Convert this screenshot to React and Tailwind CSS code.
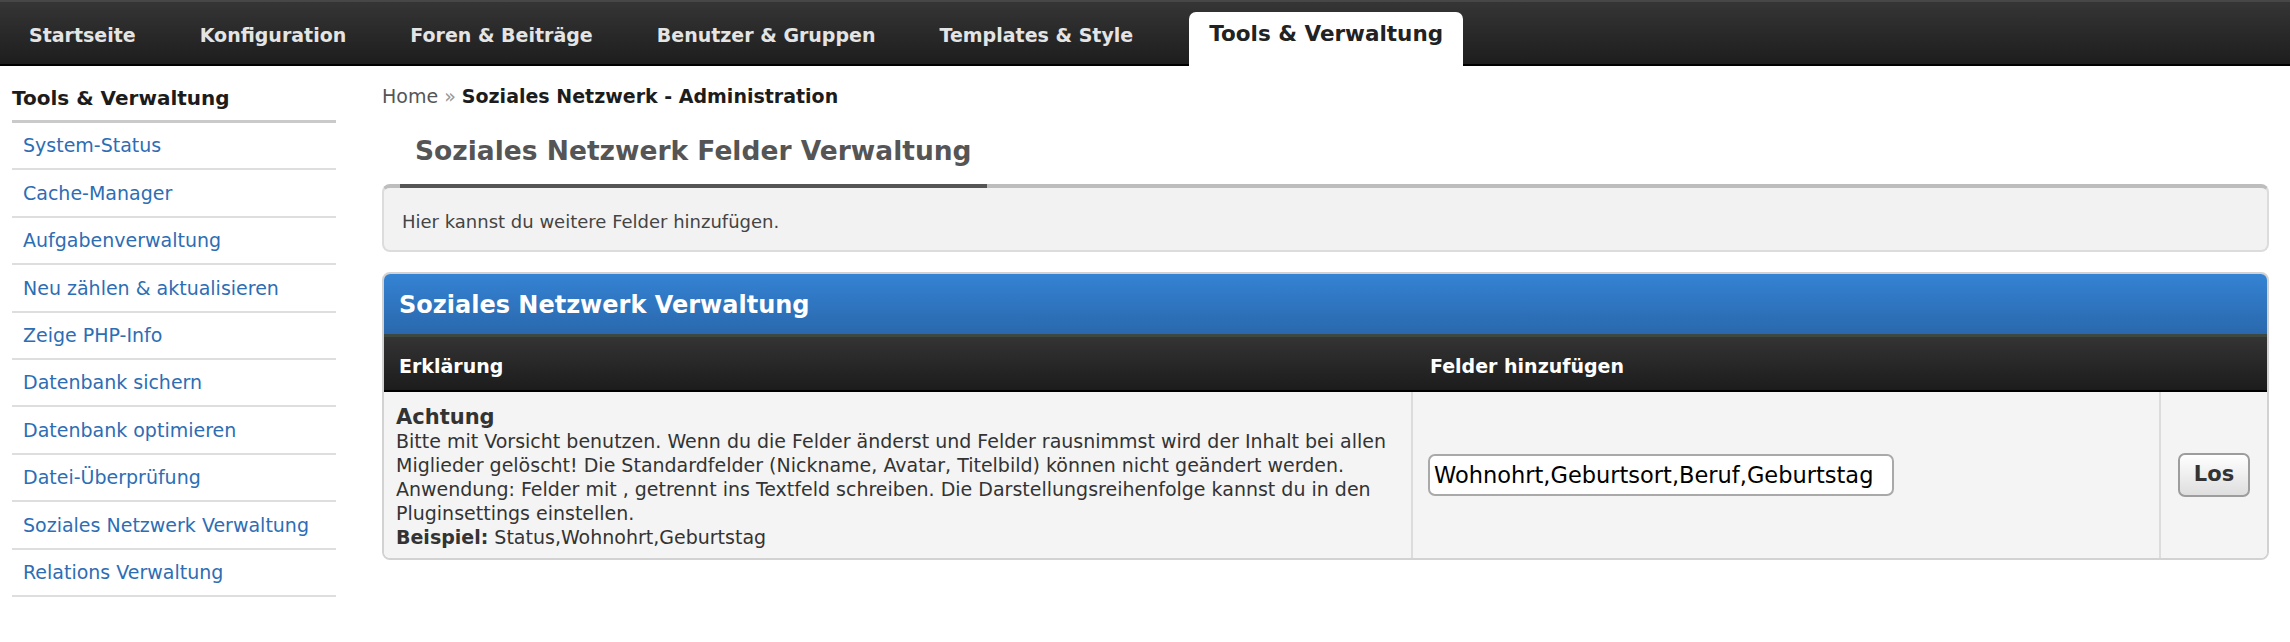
const navItems = ['Startseite', 'Konfiguration', 'Foren & Beiträge', 'Benutzer & Gruppen', 'Templates & Style', 'Tools & Verwaltung']

const sideLinks = [
    'System-Status',
    'Cache-Manager',
    'Aufgabenverwaltung',
    'Neu zählen & aktualisieren',
    'Zeige PHP-Info',
    'Datenbank sichern',
    'Datenbank optimieren',
    'Datei-Überprüfung',
    'Soziales Netzwerk Verwaltung',
    'Relations Verwaltung',
]

export default function App() {
    return (
        <div className="min-h-[642px] bg-white font-['DejaVu_Sans',sans-serif] text-[#333]">
            {/* Top navigation */}
            <nav className="h-[66px] flex items-end gap-6 pl-[9px] bg-gradient-to-b from-[#353535] to-[#1d1d1d] border-t-2 border-[#474747] shadow-[inset_0_-2px_0_#000]">
                {navItems.map((item, i) => {
                    const active = i === navItems.length - 1
                    return (
                        <a key={item} href="#"
                            className={`h-[53px] px-5 pt-[10px] leading-[24px] font-bold whitespace-nowrap ${active ? 'ml-3 h-[54px] text-[21.5px] bg-white text-[#222] rounded-t-[7px]' : 'text-[19px] text-[#e4e4e4]'}`}>
                            {item}
                        </a>
                    )
                })}
            </nav>

            <div className="flex">
                {/* Sidebar */}
                <aside className="w-[324px] ml-3 shrink-0">
                    <h2 className="pt-5 pb-[10px] border-b-[3px] border-[#cacaca] text-[20px] leading-[24px] font-bold text-[#1c1c1c]">Tools &amp; Verwaltung</h2>
                    <ul>
                        {sideLinks.map((l) => (
                            <li key={l} className="h-[47.4px] border-b-2 border-[#dedede] flex items-center pl-[11px]">
                                <a href="#" className="text-[19px] text-[#2d6db4]">{l}</a>
                            </li>
                        ))}
                    </ul>
                </aside>

                {/* Main */}
                <main className="flex-1 ml-[46px] mr-[21px]">
                    <div className="pt-[18px] text-[19px] leading-[24px] whitespace-nowrap">
                        <span className="text-[#555]">Home</span> <span className="text-[#999]">»</span>{' '}
                        <span className="font-bold text-[#1c1c1c]">Soziales Netzwerk - Administration</span>
                    </div>

                    <div className="flex mt-[27px] pl-[18px] relative z-10 -mb-1">
                        <h1 className="px-[15px] pb-[17px] border-b-4 border-[#555] text-[26.5px] leading-[32px] font-bold text-[#555] whitespace-nowrap">
                            Soziales Netzwerk Felder Verwaltung
                        </h1>
                    </div>
                    <div className="rounded-[8px] border-2 border-t-4 border-[#dcdcdc] border-t-[#bdbdbd] bg-[#f2f2f2] pl-[18px] pt-[22px] pb-4 text-[18px] leading-[24px] text-[#444]">
                        Hier kannst du weitere Felder hinzufügen.
                    </div>

                    {/* Settings table */}
                    <div className="mt-5 rounded-[8px] border-2 border-[#d2d2d2] overflow-hidden">
                        <div className="h-[60px] pl-[15px] pt-[16px] bg-gradient-to-b from-[#3483d4] to-[#2a68ac] text-white text-[24px] leading-[30px] font-bold">
                            Soziales Netzwerk Verwaltung
                        </div>
                        <div className="grid grid-cols-[1027px_1fr] h-[58px] border-t-[3px] border-[#3c4840] border-b-2 border-b-black bg-gradient-to-b from-[#343434] to-[#1c1c1c] text-white text-[19px] leading-[24px] font-bold">
                            <div className="pt-[17px] pl-[15px]">Erklärung</div>
                            <div className="pt-[17px] pl-[19px]">Felder hinzufügen</div>
                        </div>
                        <div className="grid grid-cols-[1027px_748px_1fr] bg-[#f4f4f4]">
                            <div className="pl-3 pt-[13px] pb-[9px] text-[19px] leading-[24px] text-[#333] whitespace-nowrap">
                                <div className="text-[21px] font-bold">Achtung</div>
                                Bitte mit Vorsicht benutzen. Wenn du die Felder änderst und Felder rausnimmst wird der Inhalt bei allen<br />
                                Miglieder gelöscht! Die Standardfelder (Nickname, Avatar, Titelbild) können nicht geändert werden.<br />
                                Anwendung: Felder mit , getrennt ins Textfeld schreiben. Die Darstellungsreihenfolge kannst du in den<br />
                                Pluginsettings einstellen.<br />
                                <b>Beispiel:</b> Status,Wohnohrt,Geburtstag
                            </div>
                            <div className="border-l-2 border-[#dcdcdc] flex items-center pl-[15px]">
                                <input defaultValue="Wohnohrt,Geburtsort,Beruf,Geburtstag"
                                    className="w-[466px] h-[42px] rounded-[7px] border-2 border-[#a9a9a9] bg-white px-[4px] text-[22.5px] text-black font-['DejaVu_Sans',sans-serif] outline-none" />
                            </div>
                            <div className="border-l-2 border-[#dcdcdc] flex items-center justify-center">
                                <button className="w-[72px] h-[44px] rounded-[7px] border-2 border-[#9d9d9d] bg-gradient-to-b from-white to-[#dedede] text-[21px] font-bold text-[#333]">Los</button>
                            </div>
                        </div>
                    </div>
                </main>
            </div>
        </div>
    )
}
